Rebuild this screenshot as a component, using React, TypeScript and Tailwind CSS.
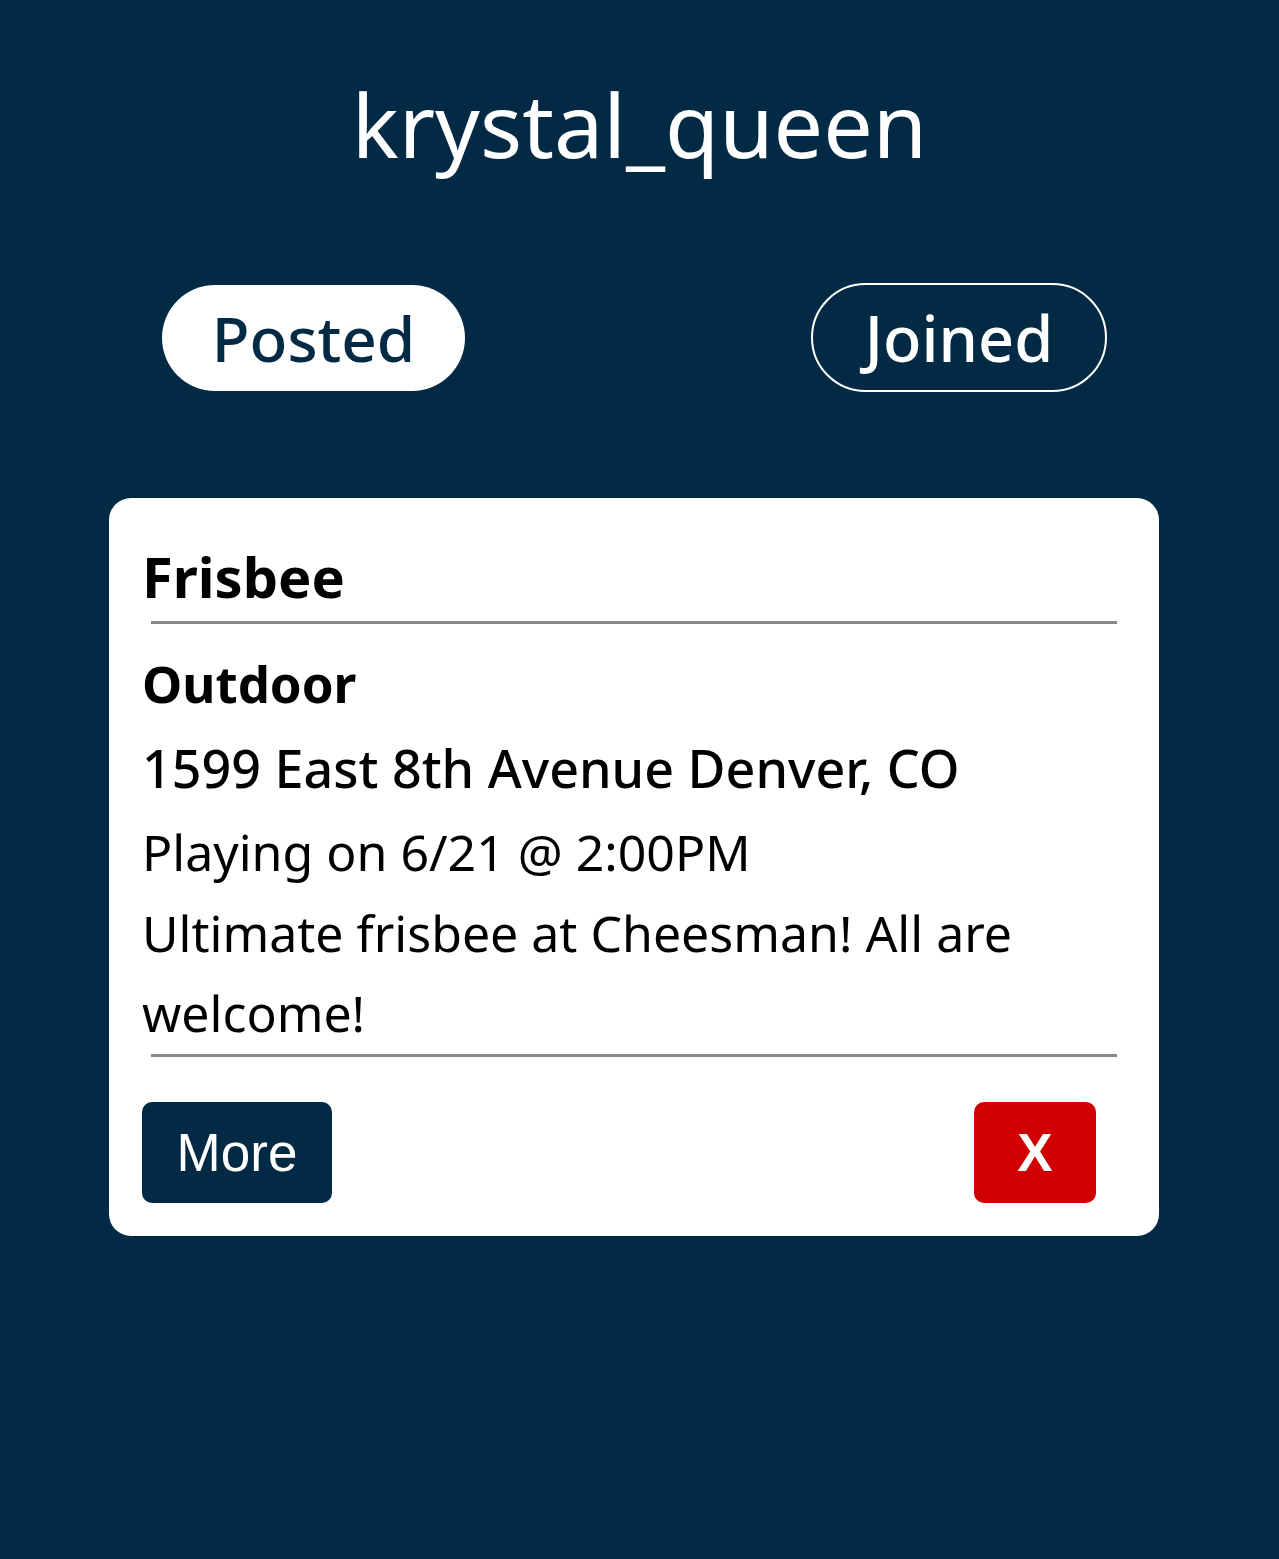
import React from 'react';

const App: React.FC = () => {
  return (
    <div className="min-h-[1559px] w-full bg-[#032a44] flex flex-col items-center" style={{ fontFamily: '"Noto Sans", sans-serif' }}>
      <h1 className="mt-[69px] text-[88px] leading-[110px] text-white">krystal_queen</h1>

      <div className="mt-[104px] w-full flex items-center justify-between pl-[162px] pr-[172px]">
        <button className="w-[303px] h-[106px] rounded-full bg-white text-[#032a44] text-[62px] font-medium leading-none flex items-center justify-center">
          Posted
        </button>
        <button className="w-[296px] h-[109px] rounded-full border-2 border-white text-white text-[63px] font-medium leading-none flex items-center justify-center">
          Joined
        </button>
      </div>

      <div className="self-start ml-[109px] mt-[106px] w-[1050px] bg-white rounded-[22px] pl-[33px] pr-[42px] pt-[38px] pb-[33px] text-black">
        <h2 className="text-[56px] font-bold leading-[80px]">Frisbee</h2>
        <div className="mt-[5px] ml-[9px] h-[3px] bg-[#888888]" />
        <div className="mt-[17px] text-[51px] font-bold leading-[84px]">Outdoor</div>
        <div className="text-[52px] font-medium leading-[86px]">1599 East 8th Avenue Denver, CO</div>
        <div className="text-[50px] leading-[82px]">Playing on 6/21 @ 2:00PM</div>
        <p className="text-[50px] leading-[80px]">Ultimate frisbee at Cheesman! All are welcome!</p>
        <div className="mt-[1px] ml-[9px] h-[3px] bg-[#888888]" />
        <div className="mt-[45px] flex justify-between pr-[21px]">
          <button className="w-[190px] h-[101px] rounded-[10px] bg-[#032a44] text-white text-[53px] flex items-center justify-center" style={{ fontFamily: '"Liberation Sans", sans-serif' }}>
            More
          </button>
          <button className="w-[122px] h-[101px] rounded-[10px] bg-[#d00000] text-white text-[53px] font-bold flex items-center justify-center" style={{ fontFamily: '"Liberation Sans", sans-serif' }}>
            X
          </button>
        </div>
      </div>
    </div>
  );
};

export default App;
